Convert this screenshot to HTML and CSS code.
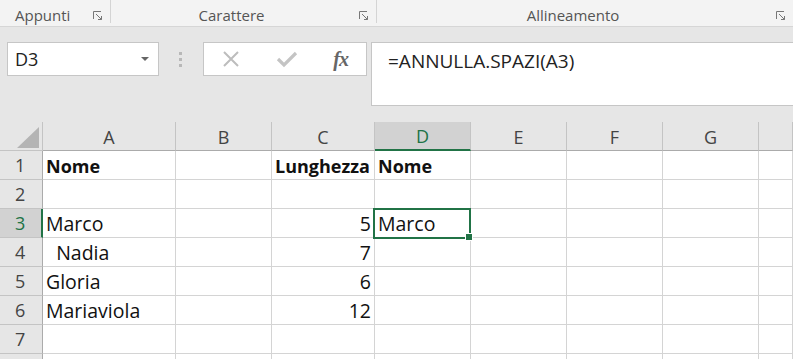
FILE: index.html
```html
<!DOCTYPE html>
<html lang="it">
<head>
  <meta charset="UTF-8">
  <title>Excel - ANNULLA.SPAZI</title>
  <link rel="stylesheet" href="styles.css">
</head>
<body>
  <div class="ribbon">
    <div class="group group-clip">
      <span class="group-label">Appunti</span>
      <svg class="launcher" width="10" height="10" viewBox="0 0 10 10"><path d="M0.5 8V0.5H8" fill="none" stroke="#777"/><path d="M3 3L8.5 8.5M5 8.5H8.5V5" fill="none" stroke="#777"/></svg>
    </div>
    <div class="group group-font">
      <span class="group-label">Carattere</span>
      <svg class="launcher" width="10" height="10" viewBox="0 0 10 10"><path d="M0.5 8V0.5H8" fill="none" stroke="#777"/><path d="M3 3L8.5 8.5M5 8.5H8.5V5" fill="none" stroke="#777"/></svg>
    </div>
    <div class="group group-align">
      <span class="group-label">Allineamento</span>
      <svg class="launcher" width="10" height="10" viewBox="0 0 10 10"><path d="M0.5 8V0.5H8" fill="none" stroke="#777"/><path d="M3 3L8.5 8.5M5 8.5H8.5V5" fill="none" stroke="#777"/></svg>
    </div>
  </div>

  <div class="formula-area">
    <div class="name-box">
      <span>D3</span>
      <svg width="10" height="6" viewBox="0 0 10 6"><path d="M1 1h8L5 5z" fill="#666"/></svg>
    </div>
    <div class="grip"><i></i><i></i><i></i></div>
    <div class="fn-box">
      <svg width="20" height="20" viewBox="0 0 20 20"><path d="M3 3L17 17M17 3L3 17" stroke="#bdbdbd" stroke-width="2"/></svg>
      <svg width="22" height="20" viewBox="0 0 22 20"><path d="M2 10L8 16L20 4" fill="none" stroke="#c4c4c4" stroke-width="3.2"/></svg>
      <span class="fx">fx</span>
    </div>
    <div class="formula-bar">=ANNULLA.SPAZI(A3)</div>
  </div>

  <div class="sheet">
    <div class="corner"><span class="tri"></span></div>
    <div class="col-head">A</div>
    <div class="col-head">B</div>
    <div class="col-head">C</div>
    <div class="col-head active">D</div>
    <div class="col-head">E</div>
    <div class="col-head">F</div>
    <div class="col-head">G</div>
    <div class="col-head"></div>

    <div class="row-head">1</div>
    <div class="cell bold">Nome</div>
    <div class="cell"></div>
    <div class="cell bold">Lunghezza</div>
    <div class="cell bold">Nome</div>
    <div class="cell"></div><div class="cell"></div><div class="cell"></div><div class="cell"></div>

    <div class="row-head">2</div>
    <div class="cell"></div><div class="cell"></div><div class="cell"></div><div class="cell"></div>
    <div class="cell"></div><div class="cell"></div><div class="cell"></div><div class="cell"></div>

    <div class="row-head active">3</div>
    <div class="cell">Marco</div>
    <div class="cell"></div>
    <div class="cell num">5</div>
    <div class="cell selected">Marco<span class="sel-box"><span class="handle"></span></span></div>
    <div class="cell"></div><div class="cell"></div><div class="cell"></div><div class="cell"></div>

    <div class="row-head">4</div>
    <div class="cell">&nbsp;&nbsp;Nadia</div>
    <div class="cell"></div>
    <div class="cell num">7</div>
    <div class="cell"></div><div class="cell"></div><div class="cell"></div><div class="cell"></div><div class="cell"></div>

    <div class="row-head">5</div>
    <div class="cell">Gloria</div>
    <div class="cell"></div>
    <div class="cell num">6</div>
    <div class="cell"></div><div class="cell"></div><div class="cell"></div><div class="cell"></div><div class="cell"></div>

    <div class="row-head">6</div>
    <div class="cell">Mariaviola</div>
    <div class="cell"></div>
    <div class="cell num">12</div>
    <div class="cell"></div><div class="cell"></div><div class="cell"></div><div class="cell"></div><div class="cell"></div>

    <div class="row-head">7</div>
    <div class="cell"></div><div class="cell"></div><div class="cell"></div><div class="cell"></div>
    <div class="cell"></div><div class="cell"></div><div class="cell"></div><div class="cell"></div>

    <div class="row-head stub"></div>
    <div class="cell stub"></div><div class="cell stub"></div><div class="cell stub"></div><div class="cell stub"></div>
    <div class="cell stub"></div><div class="cell stub"></div><div class="cell stub"></div><div class="cell stub"></div>
  </div>
</body>
</html>
```

FILE: styles.css
```css
body {
  margin: 0;
  font-family: 'Open Sans', 'Noto Sans', sans-serif;
  background: #e6e6e6;
  overflow: hidden;
  width: 793px;
  height: 359px;
}

/* ribbon group labels */
.ribbon {
  display: flex;
  height: 27px;
  background: #f3f3f3;
  border-bottom: 1px solid #d6d6d6;
  box-sizing: border-box;
}
.group {
  position: relative;
  display: flex;
  align-items: center;
  height: 23px;
  border-right: 1px solid #d4d4d4;
  box-sizing: border-box;
}
.group-clip {
  width: 111px;
  padding-left: 15px;
}
.group-font {
  width: 266px;
  justify-content: center;
  padding-right: 24px;
}
.group-align {
  flex: 1;
  justify-content: center;
  border-right: none;
  padding-right: 24px;
}
.group-label {
  font-size: 15px;
  color: #555;
  margin-top: 7px;
}
.launcher {
  position: absolute;
  right: 7px;
  top: 11px;
}

/* formula row */
.formula-area {
  display: flex;
  align-items: flex-start;
  height: 95px;
  padding-top: 15px;
  box-sizing: border-box;
}
.name-box {
  display: flex;
  align-items: center;
  justify-content: space-between;
  width: 152px;
  height: 34px;
  margin-left: 7px;
  padding: 0 8px 0 7px;
  background: #fff;
  border: 1px solid #c6c6c6;
  box-sizing: border-box;
  font-size: 18px;
  color: #222;
}
.grip {
  display: flex;
  flex-direction: column;
  gap: 3px;
  margin: 10px 21px 0 20px;
}
.grip i {
  width: 3px;
  height: 3px;
  background: #b8b8b8;
}
.fn-box {
  display: flex;
  align-items: center;
  justify-content: space-between;
  width: 164px;
  height: 34px;
  padding: 0 18px 0 17px;
  background: #fff;
  border: 1px solid #c6c6c6;
  box-sizing: border-box;
}
.fx {
  font-family: 'Liberation Serif', serif;
  font-style: italic;
  font-weight: 700;
  font-size: 20px;
  color: #666;
  letter-spacing: -1px;
}
.formula-bar {
  flex: 1;
  height: 64px;
  margin-left: 4px;
  padding: 5px 0 0 16px;
  background: #fff;
  border: 1px solid #c6c6c6;
  border-right: none;
  box-sizing: border-box;
  font-size: 19px;
  color: #222;
}

/* sheet grid: header, 7 rows, and a sliver of row 8 */
.sheet {
  display: grid;
  grid-template-columns: 43px 133px 96px 103px 96px 96px 96px 96px 1fr;
  grid-template-rows: repeat(8, 29px) 5px;
  background: #fff;
}
.sheet > div {
  box-sizing: border-box;
  border-right: 1px solid #d4d4d4;
  border-bottom: 1px solid #d4d4d4;
}
.sheet > .stub {
  border-bottom: none;
}
.corner {
  position: relative;
  background: #e6e6e6;
  border-color: #c4c4c4 !important;
}
.tri {
  position: absolute;
  right: 3px;
  bottom: 2px;
  width: 0;
  height: 0;
  border-left: 22px solid transparent;
  border-bottom: 21px solid #b4b4b4;
}
.col-head {
  display: flex;
  align-items: flex-end;
  justify-content: center;
  padding-bottom: 1px;
  background: #e6e6e6;
  color: #444;
  font-size: 18px;
  border-right-color: #c4c4c4 !important;
  border-bottom-color: #ababab !important;
}
.col-head.active {
  background: #d2d2d2;
  color: #217346;
  border-bottom: 2px solid #217346 !important;
}
.row-head {
  display: flex;
  align-items: center;
  padding-left: 15px;
  background: #e6e6e6;
  color: #444;
  font-size: 18px;
  line-height: 24px;
  border-right-color: #ababab !important;
  border-bottom-color: #c4c4c4 !important;
}
.row-head.active {
  background: #d2d2d2;
  color: #217346;
  border-right: 2px solid #217346 !important;
}
.cell {
  display: flex;
  align-items: flex-end;
  padding: 0 3px 0 3px;
  font-size: 19.5px;
  line-height: 26px;
  color: #111;
  white-space: pre;
}
.bold {
  font-weight: 700;
  font-size: 18px;
}
.num {
  justify-content: flex-end;
}
.selected {
  position: relative;
}
.sel-box {
  position: absolute;
  left: -2px;
  top: -1px;
  right: -1px;
  bottom: -2px;
  border: 2px solid #217346;
}
.handle {
  position: absolute;
  right: -4px;
  bottom: -4px;
  width: 6px;
  height: 6px;
  background: #217346;
  border: 1px solid #fff;
}
```
